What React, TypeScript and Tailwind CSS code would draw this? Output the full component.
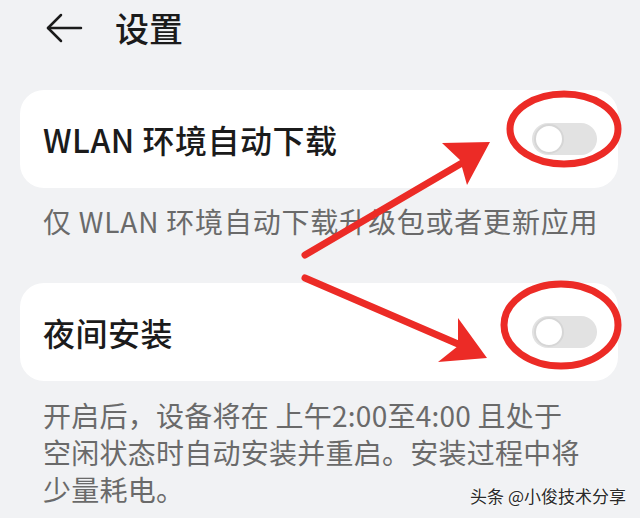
import React from 'react';

const Toggle: React.FC = () => (
    <div className="relative w-[65px] h-[32px] rounded-full bg-[#e2e2e2] shrink-0">
        <div className="absolute left-[2px] top-[1px] w-[30px] h-[30px] rounded-full bg-white border-2 border-[#d6d6d6]"></div>
    </div>
);

const SettingCard: React.FC<{ title: string }> = ({ title }) => (
    <div className="ml-[20px] mr-[22px] h-[98px] rounded-[24px] bg-white flex items-center justify-between pl-[23px] pr-[21px]">
        <span className="text-[32px] leading-none font-medium text-[#1b1b1b] tracking-[0.5px]">{title}</span>
        <Toggle />
    </div>
);

// red markup drawn over the screen: circles round the switches and arrows pointing at them
const Markup: React.FC = () => (
    <svg className="absolute inset-0 pointer-events-none" width="640" height="518" viewBox="0 0 640 518">
        <g stroke="#ec2b26" fill="none" strokeWidth="7">
            <ellipse cx="564" cy="129" rx="54" ry="35" />
            <ellipse cx="561" cy="325" rx="57" ry="41" />
        </g>
        <g stroke="#ec2b26" strokeWidth="7" strokeLinecap="round">
            <line x1="305" y1="255" x2="462" y2="163" />
            <line x1="305" y1="278" x2="458" y2="344" />
        </g>
        <g fill="#ec2b26">
            <polygon points="490,142 442,143 460,160 467,185" />
            <polygon points="487,358 458,318 458,346 438,362" />
        </g>
    </svg>
);

export default function App() {
    return (
        <div
            className="relative w-[640px] h-[518px] overflow-hidden bg-[#f1f2f4]"
            style={{ fontFamily: '"Noto Sans CJK SC", "Noto Sans", sans-serif' }}
        >
            <div className="h-[56px] flex items-center pl-[45px]">
                <svg width="38" height="32" viewBox="0 0 38 32" fill="none" stroke="#1b1b1b" strokeWidth="2.5" strokeLinecap="round" strokeLinejoin="round">
                    <path d="M36 16H3" />
                    <path d="M16 3L3 16l13 13" />
                </svg>
                <span className="ml-[32px] text-[34px] leading-none font-medium text-[#1b1b1b]">设置</span>
            </div>

            <div className="pt-[34px]">
                <SettingCard title="WLAN 环境自动下载" />
                <p className="pl-[43px] pt-[15px] pb-[43px] text-[28px] leading-[37px] tracking-[0.8px] text-[#6a6a6a]">
                    仅 WLAN 环境自动下载升级包或者更新应用
                </p>
                <SettingCard title="夜间安装" />
                <p className="pl-[43px] pr-[30px] pt-[16px] text-[28px] leading-[37px] tracking-[0.25px] text-[#6a6a6a]">
                    开启后，设备将在 上午2:00至4:00 且处于<br />
                    空闲状态时自动安装并重启。安装过程中将<br />
                    少量耗电。
                </p>
            </div>

            <Markup />

            <div
                className="absolute right-[14px] bottom-[14px] text-[17px] leading-none text-[#2a2a2a]"
                style={{ textShadow: '0 0 2px #fff, 0 0 2px #fff' }}
            >
                头条 @小俊技术分享
            </div>
        </div>
    );
}
